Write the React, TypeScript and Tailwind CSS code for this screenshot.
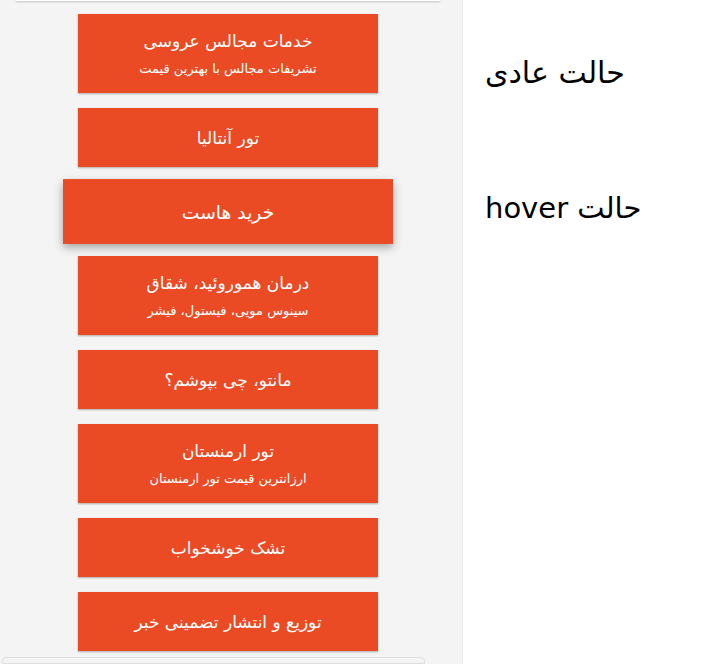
import React from 'react'

const items = [
  { title: 'خدمات مجالس عروسی', sub: 'تشریفات مجالس با بهترین قیمت' },
  { title: 'تور آنتالیا' },
  { title: 'خرید هاست', hover: true },
  { title: 'درمان هموروئید، شقاق', sub: 'سینوس مویی، فیستول، فیشر' },
  { title: 'مانتو، چی بپوشم؟' },
  { title: 'تور ارمنستان', sub: 'ارزانترین قیمت تور ارمنستان' },
  { title: 'تشک خوشخواب' },
  { title: 'توزیع و انتشار تضمینی خبر' },
]

export default function App() {
  return (
    <div className="flex h-[664px] w-[713px] overflow-hidden bg-white font-['DejaVu_Sans',sans-serif]">
      <div className="flex w-[463px] shrink-0 flex-col border-r border-[#ececec] bg-[#f4f4f4]">
        <div className="mx-[16px] h-[1px] w-[424px] bg-white shadow-[0_1px_2px_rgba(0,0,0,0.3)]" />
        <div dir="rtl" className="mt-[14px] flex flex-col items-center gap-[15px] pr-[6px]">
          {items.map((it) => (
            <a
              key={it.title}
              href="#"
              className={
                'flex w-[300px] flex-col items-center justify-center bg-[#ea4a24] text-white transition-transform ' +
                (it.sub ? 'h-[79px] ' : 'h-[59px] ') +
                (it.hover
                  ? 'scale-110 shadow-[0_4px_8px_rgba(0,0,0,0.35)]'
                  : 'shadow-[0_1px_2px_rgba(0,0,0,0.3)]')
              }
            >
              <span className="text-[17px] leading-[22px]">{it.title}</span>
              {it.sub && <span className="mt-[9px] text-[13px] leading-[16px]">{it.sub}</span>}
            </a>
          ))}
        </div>
        <div className="ml-[2px] mt-[6px] h-[20px] w-[423px] rounded-t-[4px] border border-[#dedede] bg-[#f4f4f4]" />
      </div>
      <div className="flex flex-1 flex-col items-start pl-[22px] pt-[54px] text-black">
        <div dir="rtl" className="text-[30px] leading-[38px]">حالت عادی</div>
        <div dir="rtl" className="mt-[97px] text-[29px] leading-[38px]">
          حالت <span dir="ltr">hover</span>
        </div>
      </div>
    </div>
  )
}
